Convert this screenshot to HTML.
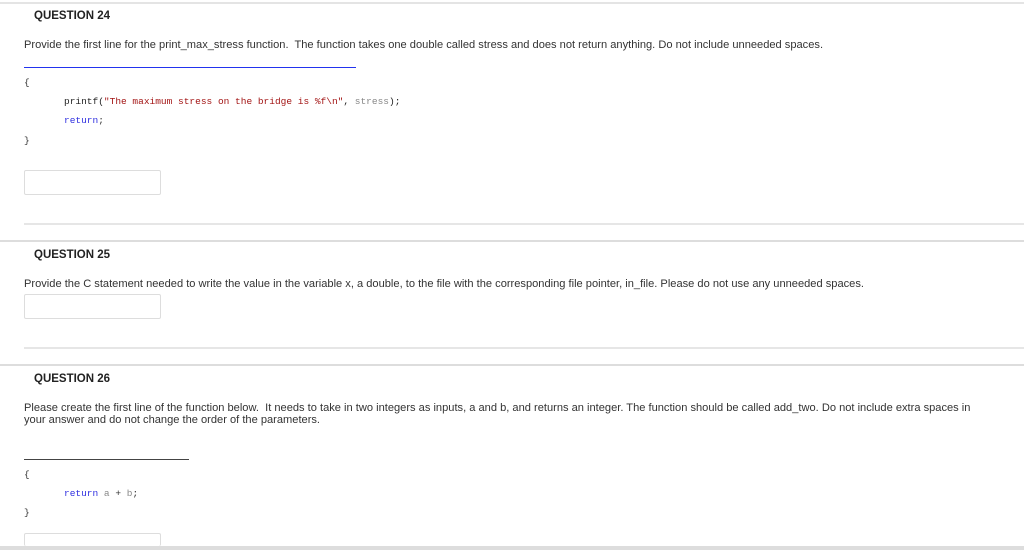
<!DOCTYPE html>
<html><head><style>
body{margin:0;width:1024px;height:550px;background:#fff;position:relative;overflow:hidden;font-family:"Liberation Sans",sans-serif;color:#333;}
.a{position:absolute;white-space:nowrap;}
.h{font-weight:bold;font-size:11.5px;color:#222;left:34px;}
.t{font-size:11.1px;left:24px;color:#333;}
.c{font-family:"Liberation Mono",monospace;font-size:9.5px;}
.box{position:absolute;left:24px;width:135px;height:23px;border:1px solid #ddd;border-radius:2px;background:#fff;}
.ln{position:absolute;height:2px;background:#e6e6e6;}
</style></head><body>
<div class="ln" style="left:0;top:2px;width:1024px;background:#e4e4e4"></div>
<div class="a h" style="top:10px">QUESTION 24</div>
<div class="a t" style="top:39px">Provide the first line for the print_max_stress function.&nbsp; The function takes one double called stress and does not return anything. Do not include unneeded spaces.</div>
<div class="a" style="left:24px;top:67px;width:332px;height:1px;background:#2233ee"></div>
<div class="a c" style="left:24px;top:77px;color:#333">{</div>
<div class="a c" style="left:64px;top:96px"><span style="color:#222">printf(</span><span style="color:#a31515">"The maximum stress on the bridge is %f\n"</span><span style="color:#222">, </span><span style="color:#888">stress</span><span style="color:#222">);</span></div>
<div class="a c" style="left:64px;top:115px"><span style="color:#3030e0">return</span>;</div>
<div class="a c" style="left:24px;top:135px">}</div>
<div class="box" style="top:170px"></div>
<div class="ln" style="left:24px;top:223px;width:1000px"></div>
<div class="ln" style="left:0;top:240px;width:1024px;background:#ddd"></div>
<div class="a h" style="top:249px">QUESTION 25</div>
<div class="a t" style="top:278px">Provide the C statement needed to write the value in the variable x, a double, to the file with the corresponding file pointer, in_file. Please do not use any unneeded spaces.</div>
<div class="box" style="top:294px"></div>
<div class="ln" style="left:24px;top:347px;width:1000px"></div>
<div class="ln" style="left:0;top:364px;width:1024px;background:#ddd"></div>
<div class="a h" style="top:373px">QUESTION 26</div>
<div class="a t" style="top:402px;line-height:12px">Please create the first line of the function below.&nbsp; It needs to take in two integers as inputs, a and b, and returns an integer. The function should be called add_two. Do not include extra spaces in<br>your answer and do not change the order of the parameters.</div>
<div class="a" style="left:24px;top:459px;width:165px;height:1px;background:#444"></div>
<div class="a c" style="left:24px;top:469px">{</div>
<div class="a c" style="left:64px;top:488px"><span style="color:#3030e0">return</span> <span style="color:#888">a</span> + <span style="color:#888">b</span>;</div>
<div class="a c" style="left:24px;top:507px">}</div>
<div class="box" style="top:533px;height:12px;border-bottom:none"></div>
<div class="ln" style="left:0;top:546px;width:1024px;height:4px;background:#ddd"></div>
</body></html>
